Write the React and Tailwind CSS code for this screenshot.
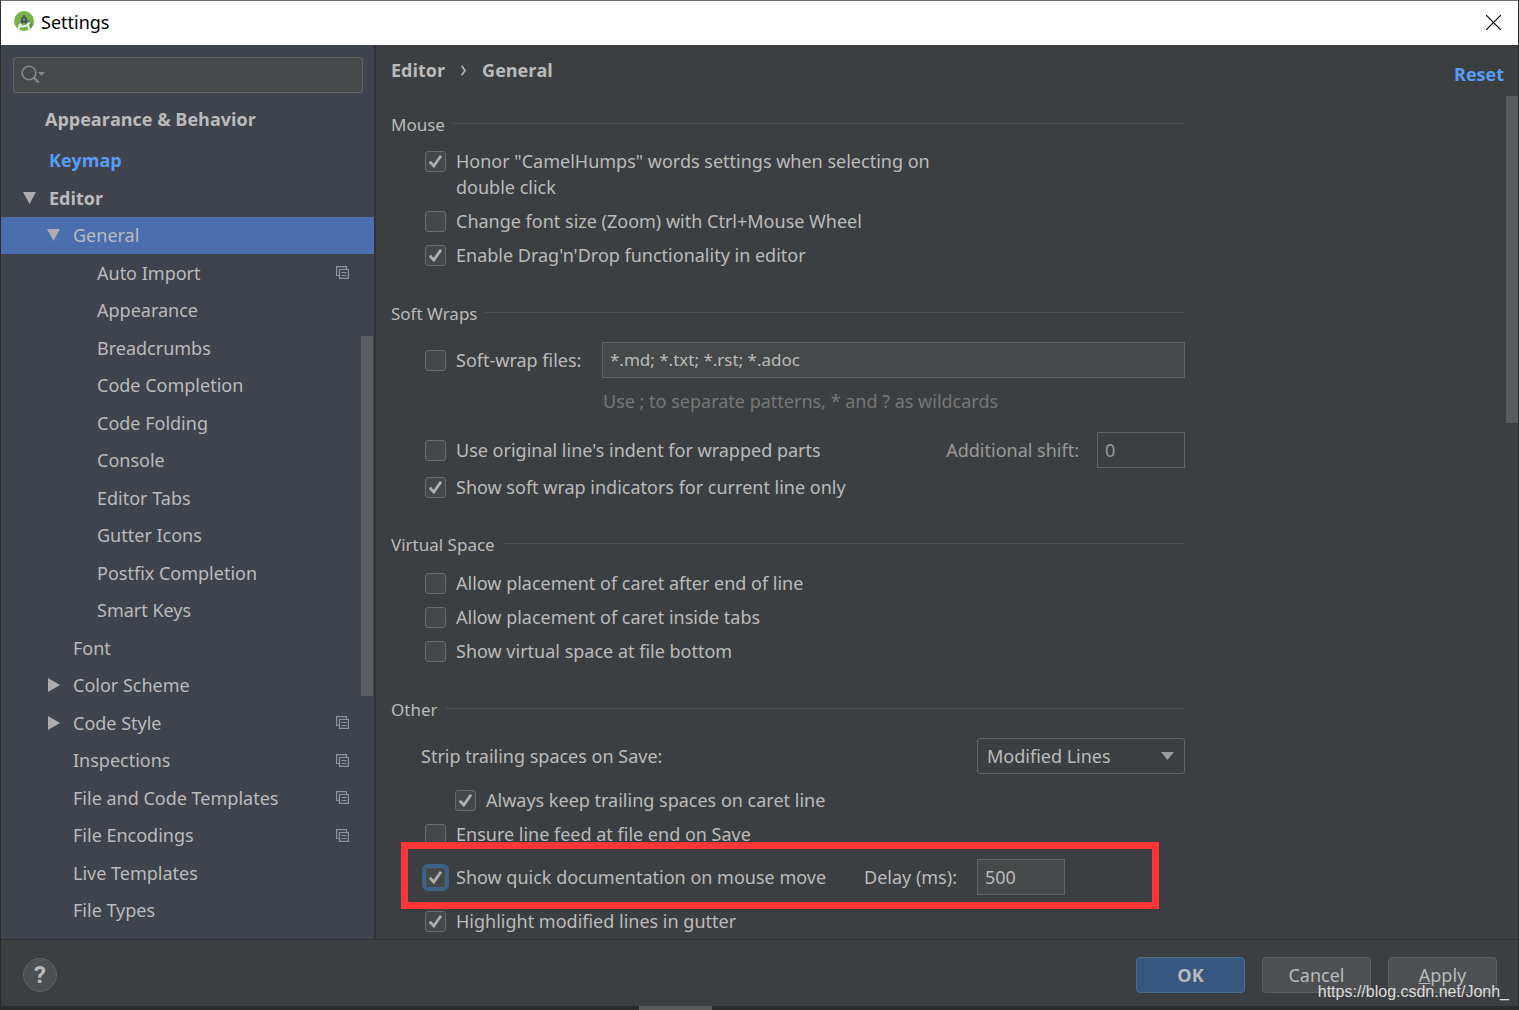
import React, { useState } from 'react';

// depth 0 = top level group, each level is indented by 24px
const treeItems = [
  { label: 'Editor', depth: 0, arrow: 'down' },
  { label: 'General', depth: 1, arrow: 'down' },
  { label: 'Auto Import', depth: 2, project: true },
  { label: 'Appearance', depth: 2 },
  { label: 'Breadcrumbs', depth: 2 },
  { label: 'Code Completion', depth: 2 },
  { label: 'Code Folding', depth: 2 },
  { label: 'Console', depth: 2 },
  { label: 'Editor Tabs', depth: 2 },
  { label: 'Gutter Icons', depth: 2 },
  { label: 'Postfix Completion', depth: 2 },
  { label: 'Smart Keys', depth: 2 },
  { label: 'Font', depth: 1 },
  { label: 'Color Scheme', depth: 1, arrow: 'right' },
  { label: 'Code Style', depth: 1, arrow: 'right', project: true },
  { label: 'Inspections', depth: 1, project: true },
  { label: 'File and Code Templates', depth: 1, project: true },
  { label: 'File Encodings', depth: 1, project: true },
  { label: 'Live Templates', depth: 1 },
  { label: 'File Types', depth: 1 },
];

const indents = ["pl-[21px] font-['Open_Sans',sans-serif] font-bold", 'pl-[45px]', 'pl-[69px]'];

const Logo = () => (
  <svg width="20" height="23" viewBox="0 0 20 23" aria-hidden="true">
    <circle cx="10" cy="10" r="10" fill="#78b648" />
    <path d="M10 5l9.500 8a10 10 0 0 1-5 6z" fill="#5f9c3c" />
    <path d="M8 10 L2.800 22 M12 10 L17.200 22" stroke="#f2f2f2" strokeWidth="2" fill="none" />
    <path d="M4.500 14 Q10.500 18 16 11.500" stroke="#f2f2f2" strokeWidth="1.8" fill="none" />
    <path d="M9 4h2v3H9zM7.200 8h5.600l1 4-2 1-1.800-2-1.800 2-2-1z" fill="#4d5358" />
    <circle cx="10" cy="8.500" r="3" fill="#4d5358" />
    <circle cx="10" cy="8.500" r="1.200" fill="#8d9296" />
  </svg>
);

const Arrow = ({ direction }) => (
  <svg width="14" height="14" viewBox="0 0 14 14" fill="#adadad" aria-hidden="true">
    {direction === 'down' && <path d="M1 1h13L7.500 13z" />}
    {direction === 'right' && <path d="M2 0v14l12-7z" />}
  </svg>
);

const ProjectIcon = () => (
  <svg width="13" height="13" viewBox="0 0 13 13" fill="none" stroke="#8a969e" strokeWidth="1.2" aria-hidden="true">
    <path d="M3 9.500H.6V.6h9.900V3" />
    <path d="M3.500 3.500h8.900v8.900H3.500z" />
    <path d="M5.500 6.500h5M5.500 9.500h5" />
  </svg>
);

const Checkbox = ({ label, checked, focused }) => {
  const [on, setOn] = useState(!!checked);

  return (
    <label className="flex items-start gap-[10px] leading-[26px]">
      <span className="mt-[3px] grid shrink-0 place-items-center">
        <input
          type="checkbox"
          checked={on}
          onChange={(e) => setOn(e.target.checked)}
          className={
            focused
              ? 'col-start-1 row-start-1 h-[21px] w-[21px] appearance-none rounded-[3px] border border-[#43688e] bg-[#43494a] outline-3 outline-[#3d6185]'
              : 'col-start-1 row-start-1 h-[21px] w-[21px] appearance-none rounded-[3px] border border-[#6b6b6b] bg-[#43494a]'
          }
        />
        {on && (
          <svg
            width="15"
            height="15"
            viewBox="0 0 15 15"
            className="pointer-events-none col-start-1 row-start-1"
            aria-hidden="true"
          >
            <path d="M1.8 7.8 L5.8 12 L13 1.8" fill="none" stroke="#b0b0b0" strokeWidth="2.8" />
          </svg>
        )}
      </span>
      <span>{label}</span>
    </label>
  );
};

const SectionTitle = ({ children }) => (
  <div className="flex h-6 gap-2">
    <h2 className="text-[17px] leading-[27px]">{children}</h2>
    <div className="h-px flex-1 self-center bg-[#515355]" />
  </div>
);

const Sidebar = () => {
  const [selected, setSelected] = useState('General');

  return (
    <nav className="relative flex w-[375px] shrink-0 flex-col border-r-2 border-[#323232] bg-[#3f434b] pb-[10px]">
      <div className="mx-3 mt-3 mr-[11px] flex h-9 items-center gap-1 rounded-[3px] border border-[#646464] bg-[#45494a] pl-[7px]">
        <svg width="25" height="20" viewBox="0 0 25 20" fill="none" stroke="#7f8b91" aria-hidden="true">
          <circle cx="8" cy="8" r="6.8" strokeWidth="1.6" />
          <path d="M12.5 12.5l5 5" strokeWidth="2.4" />
          <path d="M17 7h7l-3.500 4z" fill="#7f8b91" stroke="none" />
        </svg>
        <input
          type="text"
          aria-label="Search settings"
          className="min-w-0 flex-1 bg-transparent outline-none"
        />
      </div>

      <a href="#appearance" className="mt-[13px] pl-11 font-['Open_Sans',sans-serif] leading-[26px] font-bold">
        Appearance &amp; Behavior
      </a>
      <a href="#keymap" className="mt-[15px] pl-12 font-['Open_Sans',sans-serif] leading-[26px] font-bold text-[#589df6]">
        Keymap
      </a>

      <ul className="mt-[6px] flex flex-1 flex-col">
        {treeItems.map((item) => (
          <li key={item.label} className="flex flex-1">
            <button
              type="button"
              onClick={() => setSelected(item.label)}
              className={`flex flex-1 items-center gap-[13px] pr-[25px] text-left leading-[26px] ${indents[item.depth]} ${
                selected === item.label ? 'bg-[#4b6eaf]' : ''
              }`}
            >
              <Arrow direction={item.arrow} />
              <span className="flex-1">{item.label}</span>
              {item.project && <ProjectIcon />}
            </button>
          </li>
        ))}
      </ul>

      {/* Scrollbar thumb */}
      <div className="absolute top-[291px] right-px h-[360px] w-3 bg-[#595c62]" />
    </nav>
  );
};

const Content = () => (
  <main className="relative flex-1 overflow-hidden pl-[15px]">
    <div className="flex items-start justify-between pt-3 pr-[14px] font-['Open_Sans',sans-serif] font-bold">
      <div className="flex items-center gap-4 leading-[26px]">
        <span>Editor</span>
        <svg width="5" height="11" viewBox="0 0 5 11" fill="none" stroke="#bbbbbb" strokeWidth="1.6" aria-hidden="true">
          <path d="M.6 .6L4 5.500L.6 10.400" />
        </svg>
        <span>General</span>
      </div>
      <button type="button" className="mt-1 leading-[26px] font-bold text-[#589df6]">
        Reset
      </button>
    </div>

    <div className="mt-6 max-w-[794px]">
      <SectionTitle>Mouse</SectionTitle>
      <div className="mt-[13px] flex flex-col gap-2 pl-[34px]">
        <div className="max-w-[530px]">
          <Checkbox label={'Honor "CamelHumps" words settings when selecting on double click'} checked />
        </div>
        <Checkbox label="Change font size (Zoom) with Ctrl+Mouse Wheel" />
        <Checkbox label="Enable Drag'n'Drop functionality in editor" checked />
      </div>
    </div>

    <div className="mt-8 max-w-[794px]">
      <SectionTitle>Soft Wraps</SectionTitle>
      <div className="mt-[18px] pl-[34px]">
        <div className="grid grid-cols-[177px_1fr] items-center">
          <Checkbox label="Soft-wrap files:" />
          <input
            type="text"
            aria-label="Soft-wrap files"
            defaultValue="*.md; *.txt; *.rst; *.adoc"
            className="h-9 min-w-0 border border-[#646464] bg-[#45494a] px-[7px] pb-[2px] text-[17px] outline-none"
          />
          <p className="col-start-2 mt-[10px] pl-px leading-[26px] text-[#777777]">
            Use ; to separate patterns, * and ? as wildcards
          </p>
        </div>
        <div className="mt-[18px] flex items-center justify-between">
          <Checkbox label="Use original line's indent for wrapped parts" />
          <label className="flex items-center gap-[18px] text-[#999999]">
            Additional shift:
            <input
              type="text"
              defaultValue="0"
              className="h-9 w-[88px] border border-[#646464] bg-transparent px-[7px] outline-none"
            />
          </label>
        </div>
        <div className="mt-[6px]">
          <Checkbox label="Show soft wrap indicators for current line only" checked />
        </div>
      </div>
    </div>

    <div className="mt-[31px] max-w-[794px]">
      <SectionTitle>Virtual Space</SectionTitle>
      <div className="mt-[15px] flex flex-col gap-2 pl-[34px]">
        <Checkbox label="Allow placement of caret after end of line" />
        <Checkbox label="Allow placement of caret inside tabs" />
        <Checkbox label="Show virtual space at file bottom" />
      </div>
    </div>

    <div className="mt-8 max-w-[794px]">
      <SectionTitle>Other</SectionTitle>
      <div className="mt-[18px] flex items-center justify-between pl-[30px]">
        <label htmlFor="strip-spaces">Strip trailing spaces on Save:</label>
        <div className="grid w-[208px] items-center">
          <select
            id="strip-spaces"
            className="col-start-1 row-start-1 h-9 appearance-none rounded-[3px] border border-[#646464] bg-[#3c3f41] pl-[9px] outline-none"
          >
            <option>Modified Lines</option>
            <option>All</option>
            <option>None</option>
          </select>
          <svg
            width="13"
            height="8"
            viewBox="0 0 13 8"
            fill="#9a9da0"
            className="pointer-events-none col-start-1 row-start-1 mr-[11px] justify-self-end"
            aria-hidden="true"
          >
            <path d="M0 0h13L6.500 8z" />
          </svg>
        </div>
      </div>
      <div className="mt-[13px] flex flex-col gap-2 pl-[34px]">
        <div className="pl-[30px]">
          <Checkbox label="Always keep trailing spaces on caret line" checked />
        </div>
        <Checkbox label="Ensure line feed at file end on Save" />
      </div>
      <div className="relative mt-3 grid grid-cols-[439px_113px_88px] items-center pl-[34px]">
        <Checkbox label="Show quick documentation on mouse move" checked focused />
        <label htmlFor="delay">Delay (ms):</label>
        <input
          id="delay"
          type="text"
          defaultValue="500"
          className="h-9 min-w-0 border border-[#646464] bg-[#45494a] px-[7px] outline-none"
        />
        {/* Highlight frame */}
        <div className="pointer-events-none absolute -top-[17px] right-[26px] -bottom-[14px] left-[10px] border-7 border-[#fc3636]" />
      </div>
      <div className="mt-[13px] pl-[34px]">
        <Checkbox label="Highlight modified lines in gutter" checked />
      </div>
    </div>

    {/* Scrollbar thumb */}
    <div className="absolute top-[51px] right-0 h-[327px] w-3 bg-[#595b5d]" />
  </main>
);

const App = () => {
  return (
    <div className="flex h-screen flex-col bg-[#2b2b2b] font-['Noto_Sans',sans-serif] text-[18px] text-[#bbbbbb]">
      <div className="flex min-h-0 flex-1 flex-col border-x border-t border-x-[#2b2b2b] border-t-[#6e6e6e] bg-[#3c3f41]">
        <header className="flex h-11 shrink-0 items-center gap-[7px] bg-white pr-[17px] pb-[2px] pl-[13px] text-black">
          <Logo />
          <h1 className="flex-1">Settings</h1>
          <button type="button" aria-label="Close">
            <svg width="15" height="15" viewBox="0 0 15 15" stroke="#000000" strokeWidth="1.2" aria-hidden="true">
              <path d="M0 0l15 15M15 0L0 15" />
            </svg>
          </button>
        </header>

        <div className="flex min-h-0 flex-1">
          <Sidebar />
          <Content />
        </div>

        <footer className="relative flex h-[67px] shrink-0 items-center gap-[17px] border-t border-[#323232] pt-1 pr-[21px] pl-[22px]">
          <button
            type="button"
            className="h-[34px] w-[34px] rounded-full border border-[#5e6060] bg-[#4c5052] font-['Roboto',sans-serif] text-[24px] leading-8 font-bold"
          >
            ?
          </button>
          <div className="flex-1" />
          <button type="button" className="h-9 w-[109px] rounded-[4px] border border-[#4c708c] bg-[#365880] font-['Open_Sans',sans-serif] font-bold">
            OK
          </button>
          <button type="button" className="h-9 w-[109px] rounded-[4px] border border-[#5e6060] bg-[#4c5052]">
            Cancel
          </button>
          <button type="button" className="h-9 w-[109px] rounded-[4px] border border-[#5e6060] bg-[#4c5052]">
            <u>A</u>pply
          </button>
          {/* Watermark */}
          <span className="absolute right-[9px] bottom-[2px] font-['Liberation_Sans',sans-serif] text-[16px] leading-6 text-[#dddddd]">
            https://blog.csdn.net/Jonh_
          </span>
        </footer>
      </div>
      <div className="flex h-1 shrink-0 justify-center">
        <div className="mr-[168px] w-[73px] bg-[#5a5a5a]" />
      </div>
    </div>
  );
};

export default App;
